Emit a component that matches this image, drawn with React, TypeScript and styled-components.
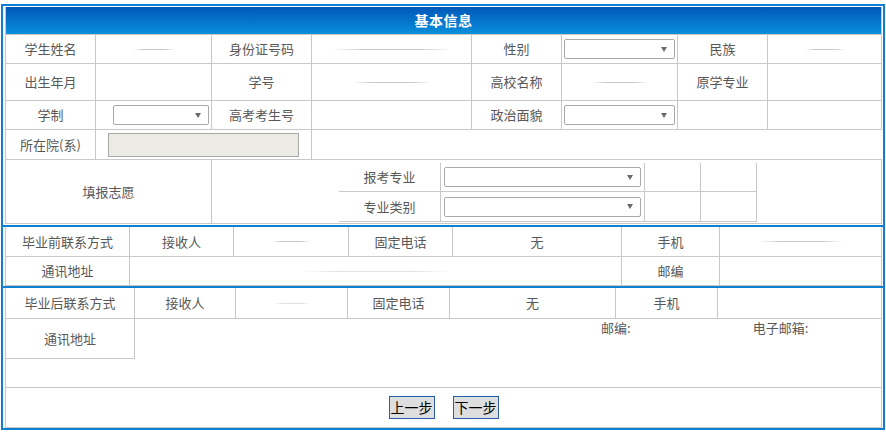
import styled, { createGlobalStyle } from "styled-components";

const GlobalStyle = createGlobalStyle`
  html, body {
    margin: 0;
    padding: 0;
    background: #fff;
  }
  body {
    font-family: "Noto Sans CJK SC", "Noto Sans", sans-serif;
    font-size: 13px;
    line-height: 16px;
    color: #585858;
  }
`;

const LINE = "#c8c8c8";
const BLUE = "#0f7fd2";

const Frame = styled.div`
  box-sizing: border-box;
  width: 884px;
  margin: 4px 0 0 1px;
  border: 2px solid ${BLUE};
  padding-top: 1px;
`;

const Section = styled.section<{ $divider?: boolean; $pb?: number }>`
  padding: 0 1px ${(p) => p.$pb ?? 0}px 2px;
  border-top: ${(p) => (p.$divider ? `2px solid ${BLUE}` : "none")};
`;

const Header = styled.div`
  height: 27px;
  display: flex;
  align-items: center;
  justify-content: center;
  padding-bottom: 1px;
  box-sizing: border-box;
  background: linear-gradient(#0057b8, #0a8fdc);
  border: 1px solid ${LINE};
  border-top: none;
  border-bottom: none;
  color: #fff;
  font-size: 14px;
  font-weight: bold;
  letter-spacing: 0.5px;
`;

const HeaderRule = styled.div`
  height: 1px;
  background: ${LINE};
`;

const Row = styled.div<{ $cols: string; $h: number }>`
  display: grid;
  grid-template-columns: ${(p) => p.$cols};
  grid-auto-rows: ${(p) => p.$h}px;
  column-gap: 1px;
  background: ${LINE};
  border: 1px solid ${LINE};
  border-top: none;
`;

const Cell = styled.div<{ $justify?: string; $pr?: number }>`
  display: flex;
  flex-direction: column;
  align-items: ${(p) => p.$justify ?? "center"};
  justify-content: center;
  padding-right: ${(p) => p.$pr ?? 0}px;
  background: #fff;
  min-width: 0;
  white-space: nowrap;
`;

const Select = styled.div<{ $w: number }>`
  box-sizing: border-box;
  width: ${(p) => p.$w}px;
  height: 20px;
  display: flex;
  align-items: center;
  justify-content: flex-end;
  padding-right: 7px;
  background: #fff;
  border: 1px solid #a9a9a9;
  border-radius: 2px;
`;

const Arrow = styled.span`
  width: 0;
  height: 0;
  border-left: 3px solid transparent;
  border-right: 3px solid transparent;
  border-top: 5px solid #6a6a6a;
`;

const ReadOnlyInput = styled.div`
  box-sizing: border-box;
  width: 191px;
  height: 24px;
  margin-top: 1px;
  background: #ebebe4;
  border: 1px solid #a9a9a9;
`;

const Trace = styled.span<{ $w: number; $tone?: string }>`
  display: block;
  width: ${(p) => p.$w}px;
  height: 1px;
  background: linear-gradient(
    90deg,
    transparent,
    ${(p) => p.$tone ?? "#c9c9c9"} 25%,
    ${(p) => p.$tone ?? "#c9c9c9"} 75%,
    transparent
  );
`;

const WishCell = styled.div`
  display: flex;
  align-items: flex-start;
  padding: 3px 0 0 127px;
  background: #fff;
`;

const InnerGrid = styled.div`
  display: grid;
  grid-template-columns: 101px 203px 55px 55px;
  grid-template-rows: 28px 29px;
  gap: 1px;
  padding: 0 1px 1px 0;
  background: ${LINE};
`;

const AddressBlock = styled.div`
  display: grid;
  grid-template-columns: 129px 1fr;
  grid-template-rows: 40px 28px;
  border: 1px solid ${LINE};
  border-top: none;
`;

const AddressLabel = styled.div`
  box-sizing: border-box;
  display: flex;
  align-items: center;
  justify-content: center;
  border-right: 1px solid ${LINE};
  border-bottom: 1px solid ${LINE};
`;

const AddressBody = styled.div`
  grid-column: 2;
  grid-row: 1 / 3;
  display: flex;
  align-items: flex-start;
  padding: 1px 0 0 466px;
`;

const Inline = styled.span<{ $ml?: number }>`
  margin-left: ${(p) => p.$ml ?? 0}px;
`;

const ButtonBar = styled.div`
  height: 39px;
  display: flex;
  align-items: center;
  justify-content: center;
  gap: 18px;
  border: 1px solid ${LINE};
  border-top: none;
`;

const StepButton = styled.button`
  box-sizing: border-box;
  width: 46px;
  height: 23px;
  padding: 0;
  background: #dedede;
  border: 1px solid #2b5ca8;
  border-radius: 0;
  color: #000;
  font-family: "Noto Sans CJK SC", "Noto Sans", sans-serif;
  font-size: 14px;
  line-height: 21px;
`;

const basicCols = "89px 115px 99px 159px 89px 115px 89px 113px";
const beforeCols = "123px 103px 114px 103px 168px 97px 161px";
const afterCols = "128px 100px 111px 101px 165px 101px 163px";

function Dropdown({ w }: { w: number }) {
  return (
    <Select $w={w}>
      <Arrow />
    </Select>
  );
}

export default function App() {
  return (
    <>
      <GlobalStyle />
      <Frame>
        <Section $pb={1}>
          <Header>基本信息</Header>
          <HeaderRule />
          <Row $cols={basicCols} $h={28}>
            <Cell>学生姓名</Cell>
            <Cell>
              <Trace $w={42} />
            </Cell>
            <Cell>身份证号码</Cell>
            <Cell>
              <Trace $w={118} />
            </Cell>
            <Cell>性别</Cell>
            <Cell>
              <Dropdown w={111} />
            </Cell>
            <Cell>民族</Cell>
            <Cell>
              <Trace $w={40} />
            </Cell>
          </Row>
          <Row $cols={basicCols} $h={36}>
            <Cell>出生年月</Cell>
            <Cell />
            <Cell>学号</Cell>
            <Cell>
              <Trace $w={78} />
            </Cell>
            <Cell>高校名称</Cell>
            <Cell>
              <Trace $w={56} />
            </Cell>
            <Cell>原学专业</Cell>
            <Cell />
          </Row>
          <Row $cols={basicCols} $h={28}>
            <Cell>学制</Cell>
            <Cell $justify="flex-end" $pr={2}>
              <Dropdown w={96} />
            </Cell>
            <Cell>高考考生号</Cell>
            <Cell />
            <Cell>政治面貌</Cell>
            <Cell>
              <Dropdown w={111} />
            </Cell>
            <Cell />
            <Cell />
          </Row>
          <Row $cols="89px 215px 570px" $h={29}>
            <Cell>所在院(系)</Cell>
            <Cell>
              <ReadOnlyInput />
            </Cell>
            <Cell />
          </Row>
          <Row $cols="205px 669px" $h={63}>
            <Cell>填报志愿</Cell>
            <WishCell>
              <InnerGrid>
                <Cell>报考专业</Cell>
                <Cell>
                  <Dropdown w={197} />
                </Cell>
                <Cell />
                <Cell />
                <Cell>专业类别</Cell>
                <Cell>
                  <Dropdown w={197} />
                </Cell>
                <Cell />
                <Cell />
              </InnerGrid>
            </WishCell>
          </Row>
        </Section>

        <Section $divider>
          <Row $cols={beforeCols} $h={29}>
            <Cell>毕业前联系方式</Cell>
            <Cell>接收人</Cell>
            <Cell>
              <Trace $w={38} />
            </Cell>
            <Cell>固定电话</Cell>
            <Cell>无</Cell>
            <Cell>手机</Cell>
            <Cell>
              <Trace $w={84} />
            </Cell>
          </Row>
          <Row $cols="123px 491px 97px 161px" $h={28}>
            <Cell>通讯地址</Cell>
            <Cell>
              <Trace $w={150} $tone="#e2e2e2" />
            </Cell>
            <Cell>邮编</Cell>
            <Cell />
          </Row>
        </Section>

        <Section $divider>
          <Row $cols={afterCols} $h={30}>
            <Cell>毕业后联系方式</Cell>
            <Cell>接收人</Cell>
            <Cell>
              <Trace $w={36} $tone="#e0e0e0" />
            </Cell>
            <Cell>固定电话</Cell>
            <Cell>无</Cell>
            <Cell>手机</Cell>
            <Cell />
          </Row>
          <AddressBlock>
            <AddressLabel>通讯地址</AddressLabel>
            <AddressBody>
              <Inline>邮编:</Inline>
              <Inline $ml={122}>电子邮箱:</Inline>
            </AddressBody>
          </AddressBlock>
          <ButtonBar>
            <StepButton type="button">上一步</StepButton>
            <StepButton type="button">下一步</StepButton>
          </ButtonBar>
        </Section>
      </Frame>
    </>
  );
}
